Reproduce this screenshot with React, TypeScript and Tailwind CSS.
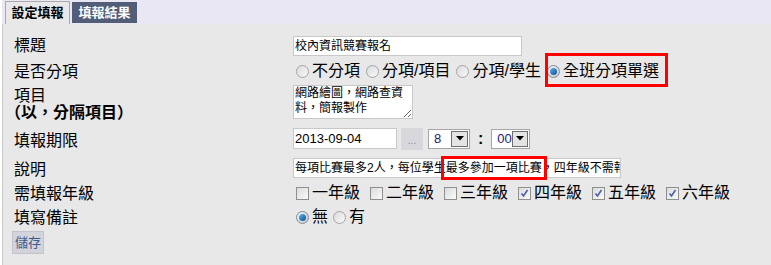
import React from 'react';

const font = { fontFamily: '"Liberation Sans", "Noto Sans CJK TC", sans-serif' };

const Radio: React.FC<{ checked?: boolean; label: string }> = ({ checked, label }) => (
  <span className="inline-flex items-center">
    <span
      className={
        'mx-[3px] flex h-[13px] w-[13px] items-center justify-center rounded-full border ' +
        (checked
          ? 'border-[#7b8aa3] bg-gradient-to-br from-[#f4f4f4] to-[#c8c8c8]'
          : 'border-[#a4a4a4] bg-gradient-to-br from-[#dcdcdc] to-[#f8f8f8]')
      }
    >
      {checked && (
        <span className="h-[7px] w-[7px] rounded-full bg-gradient-to-br from-[#5fb4ec] to-[#0b4f96]" />
      )}
    </span>
    <span className="text-[16px] leading-none text-black">{label}</span>
  </span>
);

const Check: React.FC<{ checked?: boolean; label: string }> = ({ checked, label }) => (
  <span className="inline-flex items-center">
    <span className="mx-[3px] flex h-[13px] w-[13px] items-center justify-center border border-[#8e8f8f] bg-gradient-to-br from-[#dcdcdc] to-[#fafafa]">
      {checked && (
        <svg width="9" height="9" viewBox="0 0 9 9">
          <path d="M1.5 4.5 L3.5 7 L7.5 1" fill="none" stroke="#4a5fb0" strokeWidth="1.6" />
        </svg>
      )}
    </span>
    <span className="text-[16px] leading-none text-black">{label}</span>
  </span>
);

const Select: React.FC<{ value: string; w: string }> = ({ value, w }) => (
  <div className={'flex h-[20px] items-center justify-between border border-[#a6a6a6] bg-white pl-[5px] pr-[1px] ' + w}>
    <span className="text-[13px] leading-none text-[#1b1b7a]">{value}</span>
    <span className="flex h-[16px] w-[17px] items-center justify-center border border-[#6f6f6f] bg-[#e4e4e4]">
      <svg width="8" height="5" viewBox="0 0 8 5">
        <path d="M0 0 H8 L4 4.5 Z" fill="#000" />
      </svg>
    </span>
  </div>
);

const Label: React.FC<{ children: React.ReactNode }> = ({ children }) => (
  <div className="w-[279px] shrink-0 text-[16px] leading-[17px] text-black">{children}</div>
);

export default function App() {
  return (
    <div className="relative h-[265px] w-[771px] overflow-hidden bg-white pl-[2px]" style={font}>
      {/* tabs */}
      <div className="flex h-[24px] items-end gap-[2px] bg-[#e9e7f3] pl-[3px]">
        <div className="flex h-[23px] w-[65px] items-center justify-center border border-b-0 border-[#a9a9a9] bg-[#e8e8e8] text-[13px] font-bold text-black">
          設定填報
        </div>
        <div className="mb-[1px] flex h-[21px] w-[65px] items-center justify-center bg-[#525d77] text-[13px] font-bold text-white">
          填報結果
        </div>
      </div>

      {/* panel */}
      <div className="h-[241px] border-l border-[#c9c9c9] bg-[#e8e8e8] pl-[11px] pt-[9px]">
        <div className="flex h-[25px] items-center">
          <Label>標題</Label>
          <div className="flex h-[20px] w-[229px] items-center border border-[#c8c8c8] bg-white px-[1px] text-[12px] leading-none">
            校內資訊競賽報名
          </div>
        </div>

        <div className="flex h-[26px] items-center">
          <Label>是否分項</Label>
          <div className="flex items-center gap-[3px]">
            <Radio label="不分項" />
            <Radio label="分項/項目" />
            <Radio label="分項/學生" />
            <Radio checked label="全班分項單選" />
          </div>
        </div>

        <div className="flex h-[37px] items-start pt-[1px]">
          <Label>
            <div className="mt-[2px]">項目</div>
            <div className="ml-[-9px] font-bold">（以，分隔項目）</div>
          </Label>
          <textarea
            readOnly
            value="網路繪圖，網路查資料，簡報製作"
            className="h-[34px] w-[120px] resize overflow-hidden border border-[#c8c8c8] bg-white px-[1px] text-[12px] leading-[15px] text-black outline-none"
          />
        </div>

        <div className="flex h-[35px] items-center">
          <Label>
            <div className="mt-[3px]">填報期限</div>
          </Label>
          <div className="flex items-center">
            <div className="flex h-[21px] w-[104px] items-center border border-[#c8c8c8] bg-white px-[1px] text-[13px] leading-none">
              2013-09-04
            </div>
            <div className="ml-[4px] flex h-[22px] w-[22px] items-end justify-center bg-[#d8d8dc] pb-[4px] text-[10px] leading-none text-[#7d8bab]">
              ...
            </div>
            <div className="ml-[5px]">
              <Select value="8" w="w-[42px]" />
            </div>
            <span className="mx-[8px] text-[16px] font-bold leading-none text-black">:</span>
            <Select value="00" w="w-[39px]" />
          </div>
        </div>

        <div className="flex h-[24px] items-center">
          <Label>
            <div className="mt-[3px]">說明</div>
          </Label>
          <div className="flex h-[20px] w-[328px] items-center overflow-hidden whitespace-nowrap border border-[#c8c8c8] bg-white px-[1px] text-[12px] leading-none">
            每項比賽最多2人，每位學生最多參加一項比賽，四年級不需報
          </div>
        </div>

        <div className="flex h-[26px] items-center">
          <Label>需填報年級</Label>
          <div className="flex items-center gap-[7px]">
            <Check label="一年級" />
            <Check label="二年級" />
            <Check label="三年級" />
            <Check checked label="四年級" />
            <Check checked label="五年級" />
            <Check checked label="六年級" />
          </div>
        </div>

        <div className="flex h-[22px] items-center">
          <Label>填寫備註</Label>
          <div className="flex items-center gap-[2px]">
            <Radio checked label="無" />
            <Radio label="有" />
          </div>
        </div>

        <button className="ml-[-2px] mt-[3px] flex h-[23px] w-[32px] items-center justify-center border border-[#c3c3cb] bg-[#d3d3db] text-[13px] leading-none text-[#41598a]">
          儲存
        </button>
      </div>

      {/* red annotation boxes */}
      <div className="pointer-events-none absolute left-[545px] top-[53px] h-[34px] w-[123px] border-[3px] border-[#f00]" />
      <div className="pointer-events-none absolute left-[441px] top-[156px] h-[24px] w-[106px] border-[3px] border-[#f00]" />
    </div>
  );
}
